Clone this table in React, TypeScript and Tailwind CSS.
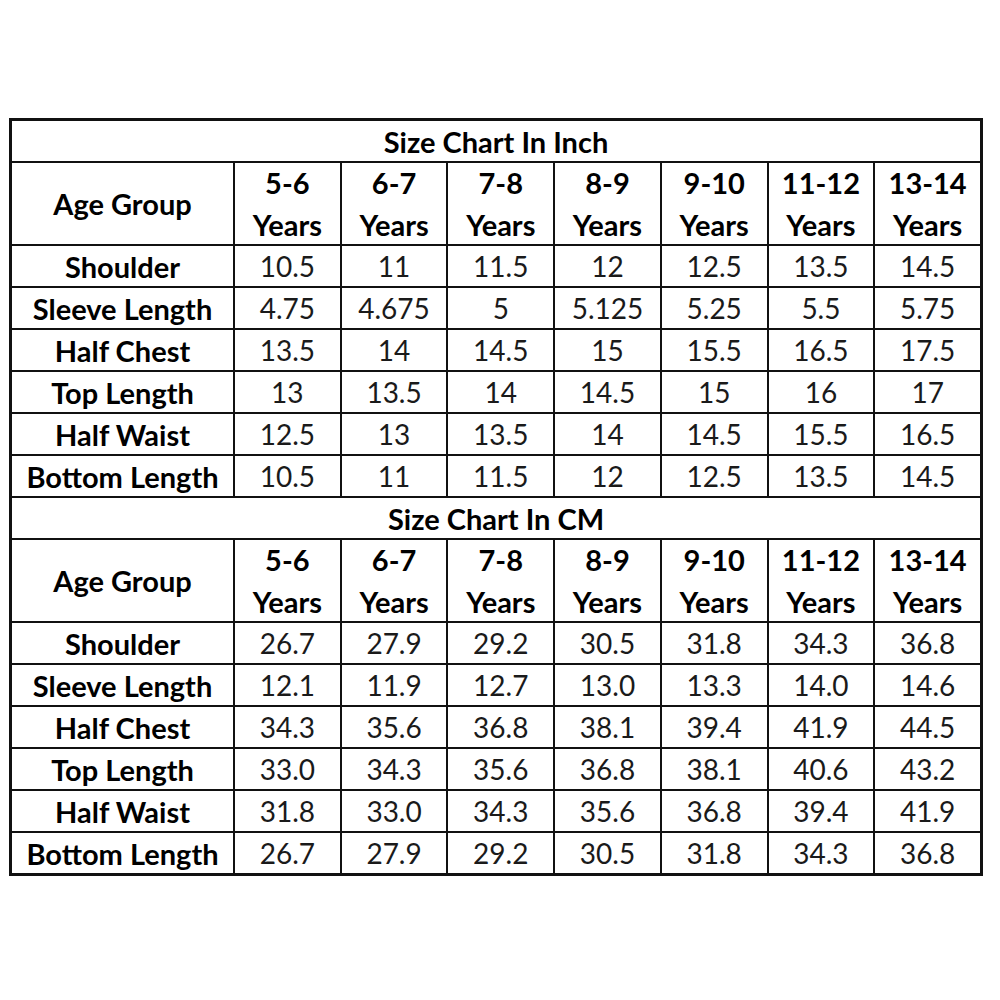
import React from "react";

const ages = ["5-6", "6-7", "7-8", "8-9", "9-10", "11-12", "13-14"];
const labels = ["Shoulder", "Sleeve Length", "Half Chest", "Top Length", "Half Waist", "Bottom Length"];

const inch = [
  ["10.5", "11", "11.5", "12", "12.5", "13.5", "14.5"],
  ["4.75", "4.675", "5", "5.125", "5.25", "5.5", "5.75"],
  ["13.5", "14", "14.5", "15", "15.5", "16.5", "17.5"],
  ["13", "13.5", "14", "14.5", "15", "16", "17"],
  ["12.5", "13", "13.5", "14", "14.5", "15.5", "16.5"],
  ["10.5", "11", "11.5", "12", "12.5", "13.5", "14.5"],
];

const cm = [
  ["26.7", "27.9", "29.2", "30.5", "31.8", "34.3", "36.8"],
  ["12.1", "11.9", "12.7", "13.0", "13.3", "14.0", "14.6"],
  ["34.3", "35.6", "36.8", "38.1", "39.4", "41.9", "44.5"],
  ["33.0", "34.3", "35.6", "36.8", "38.1", "40.6", "43.2"],
  ["31.8", "33.0", "34.3", "35.6", "36.8", "39.4", "41.9"],
  ["26.7", "27.9", "29.2", "30.5", "31.8", "34.3", "36.8"],
];

function Section({ title, data }: { title: string; data: string[][] }) {
  return (
    <>
      <div className="col-span-8 h-[40px] bg-white flex items-center justify-center font-bold text-[29px] text-black">
        {title}
      </div>
      <div className="h-[81px] bg-white flex items-center justify-center font-bold text-[29px] text-black">Age Group</div>
      {ages.map((a) => (
        <div key={a} className="h-[81px] bg-white flex flex-col items-center justify-center font-bold text-[29px] text-black leading-[42px]">
          <span>{a}</span>
          <span>Years</span>
        </div>
      ))}
      {data.map((row, i) => (
        <React.Fragment key={i}>
          <div className="h-[40px] bg-white flex items-center justify-center font-bold text-[29px] text-black">{labels[i]}</div>
          {row.map((v, j) => (
            <div key={j} className="h-[40px] bg-white flex items-center justify-center text-[28px] text-[#1a1a1a]">
              {v}
            </div>
          ))}
        </React.Fragment>
      ))}
    </>
  );
}

export default function App() {
  return (
    <div className="w-[1000px] h-[1000px] bg-white pt-[118px] pl-[9px]" style={{ fontFamily: "Lato, 'Open Sans', sans-serif" }}>
      <div className="w-[974px] border-[3px] border-[#111] bg-[#111]">
        <div className="grid grid-cols-[221px_repeat(7,1fr)] gap-[2px] leading-none">
          <Section title="Size Chart In Inch" data={inch} />
          <Section title="Size Chart In CM" data={cm} />
        </div>
      </div>
    </div>
  );
}
